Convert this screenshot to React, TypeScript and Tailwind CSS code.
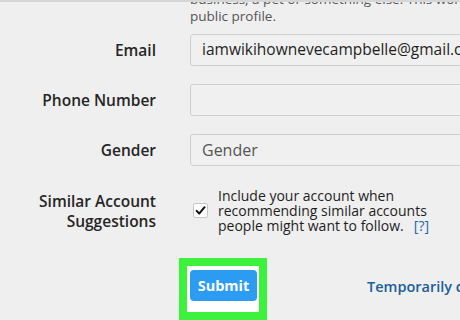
import React from 'react';

const FONT = { fontFamily: '"Open Sans", "Noto Sans", sans-serif' };

const Label: React.FC<{ children: React.ReactNode }> = ({ children }) => (
  <div className="w-[156px] shrink-0 text-right text-[15.5px] font-semibold leading-[19px] text-[#262626]">{children}</div>
);

const Field: React.FC<{ value?: string; placeholder?: string }> = ({ value, placeholder }) => (
  <div className="ml-[34px] h-[32px] w-[320px] shrink-0 rounded-[3px] border border-[#cfcfcf] bg-[#f0f0f0] pl-[11px] flex items-center">
    {value && <span className="text-[15.5px] text-[#1e1e1e] whitespace-nowrap">{value}</span>}
    {placeholder && <span className="text-[16px] text-[#555]">{placeholder}</span>}
  </div>
);

export default function App() {
  return (
    <div className="w-[460px] h-[320px] overflow-hidden bg-[#efefef] relative" style={FONT}>
      <div className="absolute top-0 left-0 right-0 h-[2px] bg-[#d6d6d6]" />

      <div className="ml-[190px] mt-[-9px] text-[13.5px] leading-[17px] text-[#555] whitespace-nowrap">
        <div>business, a pet or something else. This won't be a</div>
        <div>public profile.</div>
      </div>

      <div className="flex items-center mt-[9px]">
        <Label>Email</Label>
        <Field value="iamwikihownevecampbelle@gmail.com" />
      </div>

      <div className="flex items-center mt-[18px]">
        <Label>Phone Number</Label>
        <Field />
      </div>

      <div className="flex items-center mt-[18px]">
        <Label>Gender</Label>
        <Field placeholder="Gender" />
      </div>

      <div className="flex items-center mt-[22px]">
        <div className="w-[156px] shrink-0 text-right text-[15.5px] font-semibold leading-[20px] text-[#262626]">
          Similar Account
          <br />
          Suggestions
        </div>
        <div className="ml-[37px] flex items-center gap-[10px]">
          <div className="w-[15px] h-[15px] bg-white border border-[#c8c8c8] rounded-[2px] flex items-center justify-center">
            <svg width="11" height="11" viewBox="0 0 12 12">
              <path d="M1.8 6.4 L4.6 9.3 L10.4 2.4" fill="none" stroke="#111" strokeWidth="2.2" strokeLinecap="round" strokeLinejoin="round" />
            </svg>
          </div>
          <div className="text-[14px] leading-[15px] text-[#1e1e1e] whitespace-nowrap">
            <div>Include your account when</div>
            <div>recommending similar accounts</div>
            <div>
              people might want to follow.<span className="ml-[10px] text-[#1f64b0]">[?]</span>
            </div>
          </div>
        </div>
      </div>

      <div className="flex items-start mt-[25px]">
        <div className="ml-[179px] w-[88px] h-[62px] shrink-0 border-[8px] border-[#3df23d] bg-white pl-[3px] pt-[4px]">
          <button className="w-[67px] h-[31px] rounded-[4px] bg-[#2b9cf2] text-white text-[14.5px] font-bold flex items-center justify-center">
            Submit
          </button>
        </div>
        <div className="ml-[100px] mt-[18px] text-[14.5px] font-semibold text-[#1b5e9a] whitespace-nowrap">
          Temporarily disable my account
        </div>
      </div>
    </div>
  );
}
